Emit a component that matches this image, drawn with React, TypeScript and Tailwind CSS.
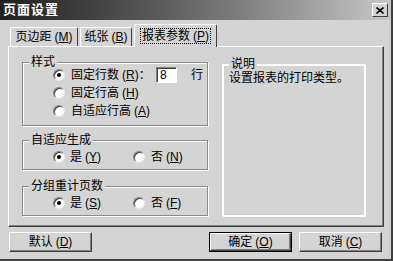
import React from 'react';

const font = { fontFamily: '"Liberation Sans", "Noto Sans CJK SC", sans-serif' };

const Key: React.FC<{ k: string }> = ({ k }) => (
  <span className="ml-[3px]">
    (<span className="underline underline-offset-[1px]">{k}</span>)
  </span>
);

const Radio: React.FC<{ checked?: boolean }> = ({ checked }) => (
  <span className="relative w-[12px] h-[12px] rounded-full bg-white border border-t-[#808080] border-l-[#808080] border-r-[#e8e8e8] border-b-[#e8e8e8] shadow-[inset_1px_1px_0_#404040] flex items-center justify-center shrink-0">
    {checked && <span className="w-[4px] h-[4px] rounded-full bg-black" />}
  </span>
);

const Group: React.FC<{ title: string; className?: string; children?: React.ReactNode }> = ({
  title,
  className = '',
  children,
}) => (
  <div
    className={`relative border border-[#8a8a8a] shadow-[inset_1px_1px_0_#ffffff,1px_1px_0_#ffffff] ${className}`}
  >
    <span className="absolute -top-[8px] left-[6px] px-[2px] bg-[#d4d4d4] leading-[14px] whitespace-nowrap">
      {title}
    </span>
    {children}
  </div>
);

const Button: React.FC<{ label: string; k: string; primary?: boolean; className?: string }> = ({
  label,
  k,
  primary,
  className = '',
}) => (
  <div
    className={`h-[20px] w-[83px] flex items-center justify-center ${
      primary ? 'border border-black' : ''
    } ${className}`}
  >
    <div className="w-full h-full flex items-center justify-center whitespace-nowrap border border-t-white border-l-white border-r-[#404040] border-b-[#404040] shadow-[inset_-1px_-1px_0_#808080]">
      {label}
      <Key k={k} />
    </div>
  </div>
);

export default function App() {
  return (
    <div
      className="w-[393px] h-[261px] bg-[#d4d4d4] text-[12px] text-black flex flex-col border-r-[2px] border-b-[2px] border-r-[#404040] border-b-[#404040] overflow-hidden"
      style={font}
    >
      {/* title bar */}
      <div className="h-[20px] shrink-0 flex items-center justify-between pl-[3px] pr-[3px] bg-linear-to-r from-[#202020] via-[#6a6a6a] to-[#c8c8c8]">
        <span className="text-white font-bold text-[13px] tracking-[1px]">页面设置</span>
        <div className="w-[16px] h-[14px] bg-[#d4d4d4] border border-t-white border-l-white border-r-[#404040] border-b-[#404040] flex items-center justify-center">
          <svg width="8" height="7" viewBox="0 0 8 7">
            <path d="M0.5 0.5 L7.5 6.5 M7.5 0.5 L0.5 6.5" stroke="#000" strokeWidth="1.6" />
          </svg>
        </div>
      </div>

      {/* tabs */}
      <div className="h-[26px] shrink-0 flex items-end pl-[10px] whitespace-nowrap">
        <div className="w-[68px] h-[19px] flex items-center justify-center border-t border-l border-white border-r border-r-[#404040] rounded-t-[2px]">
          页边距
          <Key k="M" />
        </div>
        <div className="ml-[2px] w-[52px] h-[19px] flex items-center justify-center border-t border-l border-white border-r border-r-[#404040] rounded-t-[2px]">
          纸张
          <Key k="B" />
        </div>
        <div className="ml-[2px] w-[83px] h-[23px] -mb-[1px] z-10 relative bg-[#d4d4d4] flex items-center justify-center border-t border-l border-white border-r border-r-[#404040] rounded-t-[2px]">
          <span className="border border-dotted border-black px-[1px] leading-[14px]">
            报表参数
            <Key k="P" />
          </span>
        </div>
      </div>

      {/* panel */}
      <div className="ml-[8px] w-[376px] h-[181px] shrink-0 flex border border-t-white border-l-white border-r-[#404040] border-b-[#404040] shadow-[inset_-1px_-1px_0_#808080] pl-[13px] pt-[15px] whitespace-nowrap">
        <div className="w-[186px] shrink-0 flex flex-col">
          <Group title="样式" className="h-[64px] pt-[3px]">
            <div className="h-[18px] flex items-center pl-[30px]">
              <Radio checked />
              <span className="ml-[6px] w-[85px] shrink-0">
                固定行数
                <Key k="R" />：
              </span>
              <div className="w-[21px] h-[16px] shrink-0 bg-white border border-t-[#808080] border-l-[#808080] border-r-white border-b-white shadow-[inset_1px_1px_0_#404040] pl-[3px] leading-[14px]">
                8
              </div>
              <span className="ml-[14px]">行</span>
            </div>
            <div className="h-[18px] flex items-center pl-[30px]">
              <Radio />
              <span className="ml-[6px]">
                固定行高
                <Key k="H" />
              </span>
            </div>
            <div className="h-[18px] flex items-center pl-[30px]">
              <Radio />
              <span className="ml-[6px]">
                自适应行高
                <Key k="A" />
              </span>
            </div>
          </Group>

          <Group title="自适应生成" className="mt-[14px] h-[30px] pt-[7px]">
            <div className="h-[18px] flex items-center pl-[30px]">
              <Radio checked />
              <span className="ml-[5px] w-[63px] shrink-0">
                是<Key k="Y" />
              </span>
              <Radio />
              <span className="ml-[6px]">
                否<Key k="N" />
              </span>
            </div>
          </Group>

          <Group title="分组重计页数" className="mt-[16px] h-[30px] pt-[7px]">
            <div className="h-[18px] flex items-center pl-[30px]">
              <Radio checked />
              <span className="ml-[5px] w-[63px] shrink-0">
                是<Key k="S" />
              </span>
              <Radio />
              <span className="ml-[6px]">
                否<Key k="F" />
              </span>
            </div>
          </Group>
        </div>

        <Group
          title="说明"
          className="ml-[14px] mt-[2px] w-[143px] h-[152px] shrink-0 border-white pl-[6px] pt-[6px]"
        >
          <div className="leading-[14px]">设置报表的打印类型。</div>
        </Group>
      </div>

      {/* buttons */}
      <div className="mt-[5px] flex pl-[9px] shrink-0">
        <Button label="默认" k="D" />
        <Button label="确定" k="O" primary className="ml-[117px]" />
        <Button label="取消" k="C" className="ml-[7px]" />
      </div>
    </div>
  );
}
